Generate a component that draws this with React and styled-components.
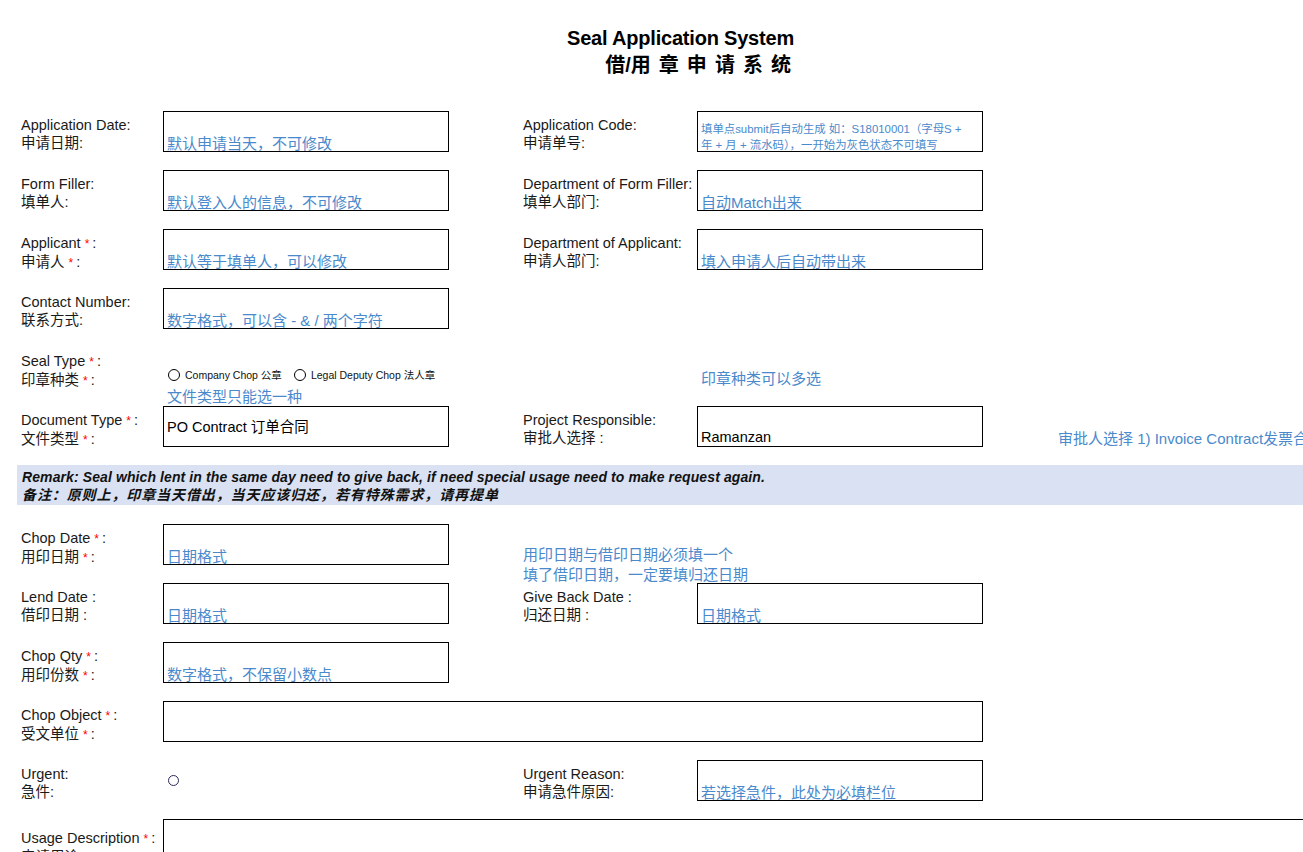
import React from 'react';
import styled, { createGlobalStyle } from 'styled-components';

const GlobalStyle = createGlobalStyle`
  html, body {
    margin: 0;
    padding: 0;
    overflow: hidden;
    background: #ffffff;
  }
  body {
    font-family: "Liberation Sans", "Noto Sans CJK SC", sans-serif;
    color: #1a1a1a;
  }
`;

const Page = styled.div`
  width: 100vw;
  height: 100vh;
  overflow: hidden;
  box-sizing: border-box;
  padding: 25px 0 0 21px;
`;

const Title = styled.div`
  width: 773px;
  text-align: right;
  font-weight: bold;
  font-size: 20px;
  line-height: 27px;
  color: #000;
  margin-bottom: 32px;
`;

const TitleLine = styled.div`
  letter-spacing: -0.2px;
`;

const TitleCn = styled.div`
  padding-right: 3px;
  word-spacing: 2.5px;
`;

const Row = styled.div`
  display: grid;
  grid-template-columns: 142px 286px 74px 174px 286px 1fr;
  height: 41px;
  margin-bottom: 18px;
`;

const Label = styled.div`
  grid-column: ${p => p.$col || 'auto'};
  padding-top: ${p => p.$top || 5}px;
  font-size: 14.5px;
  line-height: 18px;
  white-space: nowrap;
`;

const Star = styled.span`
  color: #ff0000;
  font-size: 12px;
  margin: 0 3px 0 4px;
`;

const Box = styled.div`
  grid-column: ${p => p.$col || 'auto'};
  box-sizing: border-box;
  height: 41px;
  border: 1px solid #000;
  display: flex;
  align-items: ${p => p.$align || 'flex-end'};
  padding: ${p => p.$pad || '0 3px'};
  margin-right: ${p => (p.$bleed ? '-40px' : '0')};
  white-space: nowrap;
`;

const Hint = styled.span`
  color: #4a89cc;
  font-size: 15px;
  line-height: 15px;
`;

const SmallHint = styled.div`
  color: #4a89cc;
  font-size: 11.4px;
  line-height: 16px;
`;

const Value = styled.span`
  color: #000;
  font-size: 14.5px;
  line-height: 18px;
`;

const Cell = styled.div`
  grid-column: ${p => p.$col || 'auto'};
  padding: ${p => p.$pad || '0'};
  display: flex;
  flex-direction: column;
  align-items: flex-start;
  white-space: nowrap;
`;

const Radios = styled.div`
  display: flex;
  align-items: center;
  gap: 12px;
  padding-left: 5px;
`;

const RadioOption = styled.label`
  display: flex;
  align-items: center;
  gap: 5px;
  font-size: 10.5px;
  line-height: 14px;
  color: #111;
`;

const Circle = styled.span`
  display: inline-block;
  box-sizing: border-box;
  width: ${p => p.$size || 12}px;
  height: ${p => p.$size || 12}px;
  border: 1px solid ${p => p.$color || '#000'};
  border-radius: 50%;
`;

const Note = styled.div`
  color: #4a89cc;
  font-size: 15px;
  line-height: 20px;
  margin-top: ${p => p.$gap || 0}px;
  padding-left: ${p => p.$indent || 0}px;
`;

const Remark = styled.div`
  margin: 0 0 19px -4px;
  padding: 3px 0 0 5px;
  height: 40px;
  box-sizing: border-box;
  background: #d9e1f2;
  font-weight: bold;
  font-style: italic;
  font-size: 14px;
  line-height: 18px;
  color: #111;
  letter-spacing: 0.1px;
  white-space: nowrap;
`;

const RemarkCn = styled.div`
  letter-spacing: 0.9px;
`;

function FieldLabel({ en, cn, required, col, sep = ':', top }) {
  return (
    <Label $col={col} $top={top}>
      <div>
        {en}
        {required && <Star>*</Star>}
        {sep}
      </div>
      <div>
        {cn}
        {required && <Star>*</Star>}
        {sep}
      </div>
    </Label>
  );
}

export default function App() {
  return (
    <Page>
      <GlobalStyle />
      <Title>
        <TitleLine>Seal Application System</TitleLine>
        <TitleCn>借/用 章 申 请 系 统</TitleCn>
      </Title>

      <Row>
        <FieldLabel en="Application Date" cn="申请日期" />
        <Box>
          <Hint>默认申请当天，不可修改</Hint>
        </Box>
        <FieldLabel col={4} en="Application Code" cn="申请单号" />
        <Box $align="flex-start" $pad="9px 3px 0">
          <div>
            <SmallHint>填单点submit后自动生成 如：S18010001（字母S +</SmallHint>
            <SmallHint>年 + 月 + 流水码），一开始为灰色状态不可填写</SmallHint>
          </div>
        </Box>
      </Row>

      <Row>
        <FieldLabel en="Form Filler" cn="填单人" />
        <Box>
          <Hint>默认登入人的信息，不可修改</Hint>
        </Box>
        <FieldLabel col={4} en="Department of Form Filler" cn="填单人部门" />
        <Box>
          <Hint>自动Match出来</Hint>
        </Box>
      </Row>

      <Row>
        <FieldLabel en="Applicant" cn="申请人" required />
        <Box>
          <Hint>默认等于填单人，可以修改</Hint>
        </Box>
        <FieldLabel col={4} en="Department of Applicant" cn="申请人部门" />
        <Box>
          <Hint>填入申请人后自动带出来</Hint>
        </Box>
      </Row>

      <Row>
        <FieldLabel en="Contact Number" cn="联系方式" />
        <Box>
          <Hint>数字格式，可以含 - &amp; / 两个字符</Hint>
        </Box>
      </Row>

      <Row>
        <FieldLabel en="Seal Type" cn="印章种类" required />
        <Cell $col="2 / 4" $pad="21px 0 0">
          <Radios>
            <RadioOption>
              <Circle />
              Company Chop 公章
            </RadioOption>
            <RadioOption>
              <Circle />
              Legal Deputy Chop 法人章
            </RadioOption>
          </Radios>
          <Note $gap={5} $indent={4}>文件类型只能选一种</Note>
        </Cell>
        <Cell $col={5} $pad="22px 0 0 4px">
          <Note>印章种类可以多选</Note>
        </Cell>
      </Row>

      <Row>
        <FieldLabel en="Document Type" cn="文件类型" required />
        <Box $align="center">
          <Value>PO Contract 订单合同</Value>
        </Box>
        <FieldLabel col={4} en="Project Responsible" cn="审批人选择 " />
        <Box>
          <Value>Ramanzan</Value>
        </Box>
        <Cell $pad="23px 0 0 75px">
          <Note>审批人选择 1) Invoice Contract发票合同</Note>
        </Cell>
      </Row>

      <Remark>
        <div>Remark: Seal which lent in the same day need to give back, if need special usage need to make request again.</div>
        <RemarkCn>备注：原则上，印章当天借出，当天应该归还，若有特殊需求，请再提单</RemarkCn>
      </Remark>

      <Row>
        <FieldLabel en="Chop Date" cn="用印日期" required />
        <Box>
          <Hint>日期格式</Hint>
        </Box>
        <Cell $col="4 / 6" $pad="21px 0 0">
          <Note>用印日期与借印日期必须填一个</Note>
          <Note>填了借印日期，一定要填归还日期</Note>
        </Cell>
      </Row>

      <Row>
        <FieldLabel en="Lend Date " cn="借印日期 " sep=" :" />
        <Box>
          <Hint>日期格式</Hint>
        </Box>
        <FieldLabel col={4} en="Give Back Date " cn="归还日期 " sep=" :" />
        <Box>
          <Hint>日期格式</Hint>
        </Box>
      </Row>

      <Row>
        <FieldLabel en="Chop Qty" cn="用印份数" required />
        <Box>
          <Hint>数字格式，不保留小数点</Hint>
        </Box>
      </Row>

      <Row>
        <FieldLabel en="Chop Object" cn="受文单位" required />
        <Box $col="2 / 6" />
      </Row>

      <Row>
        <FieldLabel en="Urgent" cn="急件" />
        <Cell $pad="15px 0 0 5px">
          <Circle $size={11} $color="#2a2a5a" />
        </Cell>
        <FieldLabel col={4} en="Urgent Reason" cn="申请急件原因" />
        <Box>
          <Hint>若选择急件，此处为必填栏位</Hint>
        </Box>
      </Row>

      <Row>
        <FieldLabel en="Usage Description" cn="申请用途" required top={10} />
        <Box $col="2 / -1" $bleed />
      </Row>
    </Page>
  );
}
